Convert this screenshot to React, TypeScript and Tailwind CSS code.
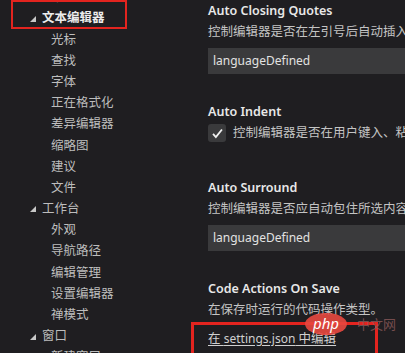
import React from "react";

type TreeItem = { label: string; level: 1 | 2; bold?: boolean; marked?: boolean };

const treeItems: TreeItem[] = [
  { label: "常用设置", level: 2 },
  { label: "文本编辑器", level: 1, bold: true, marked: true },
  { label: "光标", level: 2 },
  { label: "查找", level: 2 },
  { label: "字体", level: 2 },
  { label: "正在格式化", level: 2 },
  { label: "差异编辑器", level: 2 },
  { label: "缩略图", level: 2 },
  { label: "建议", level: 2 },
  { label: "文件", level: 2 },
  { label: "工作台", level: 1 },
  { label: "外观", level: 2 },
  { label: "导航路径", level: 2 },
  { label: "编辑管理", level: 2 },
  { label: "设置编辑器", level: 2 },
  { label: "禅模式", level: 2 },
  { label: "窗口", level: 1 },
  { label: "新建窗口", level: 2 },
];

const Twistie = () => (
  <svg width="6" height="6" viewBox="0 0 6 6" className="mr-[6px]">
    <polygon points="6,0 6,6 0,6" fill="#c8c8c8" />
  </svg>
);

const TreeRow: React.FC<{ item: TreeItem }> = ({ item }) => (
  <div
    className={
      item.level === 1
        ? "relative flex items-center h-[21.2px] pl-[30px]"
        : "relative flex items-center h-[21.2px] pl-[51px]"
    }
  >
    {item.level === 1 && <Twistie />}
    <span
      className={
        item.bold
          ? "text-[12.5px] font-bold text-[#ececec]"
          : "text-[12.5px] text-[#bdbdbd]"
      }
    >
      {item.label}
    </span>
    {/* red annotation box */}
    {item.marked && (
      <div className="absolute left-[11px] top-[-8px] w-[116px] h-[29px] border-[2px] border-[#e3241f]" />
    )}
  </div>
);

const Title: React.FC<{ children: React.ReactNode }> = ({ children }) => (
  <div className="h-[21px] flex items-center text-[12.5px] font-semibold text-[#e8e8e8]">
    {children}
  </div>
);

const Desc: React.FC<{ children: React.ReactNode }> = ({ children }) => (
  <div className="h-[21px] flex items-center text-[12.5px] text-[#c4c4c4] whitespace-nowrap">
    {children}
  </div>
);

const SelectBox = () => (
  <div className="mt-[5px] h-[26px] bg-[#3a3a3c] flex items-center pl-[5px] text-[12px] text-[#e2e2e2]">
    languageDefined
  </div>
);

export default function App() {
  return (
    <div
      className="w-[405px] h-[353px] overflow-hidden bg-[#1f1e21] flex relative"
      style={{ fontFamily: '"Noto Sans", "Noto Sans CJK SC", sans-serif' }}
    >
      <div className="w-[196px] shrink-0 -mt-[13px]">
        {treeItems.map((item) => (
          <TreeRow key={item.label} item={item} />
        ))}
      </div>

      <div className="flex-1 pl-[12px] pt-[1px] min-w-0">
        <Title>Auto Closing Quotes</Title>
        <Desc>控制编辑器是否在左引号后自动插入右引号。</Desc>
        <SelectBox />

        <div className="mt-[28px]">
          <Title>Auto Indent</Title>
          <div className="flex items-center mt-[1px] whitespace-nowrap">
            <div className="w-[18px] h-[18px] rounded-[3px] bg-[#3a3a3c] flex items-center justify-center shrink-0">
              <svg width="13" height="13" viewBox="0 0 16 16">
                <path d="M2.5 8.5 L6 12.5 L13.5 3" fill="none" stroke="#f0f0f0" strokeWidth="2.2" />
              </svg>
            </div>
            <span className="ml-[7px] text-[12.5px] text-[#c4c4c4]">
              控制编辑器是否在用户键入、粘贴或移动行时自动调整缩进。
            </span>
          </div>
        </div>

        <div className="mt-[35px]">
          <Title>Auto Surround</Title>
          <Desc>控制编辑器是否应自动包住所选内容。</Desc>
          <SelectBox />
        </div>

        <div className="mt-[28px]">
          <Title>Code Actions On Save</Title>
          <Desc>在保存时运行的代码操作类型。</Desc>
          <div className="-ml-[17px] w-[187px] mt-[1px] h-[60px] border-[3px] border-[#e3241f] pl-[14px] pt-[4px] text-[12.5px] leading-[20px]">
            <span className="text-[#d0d0d0] underline underline-offset-2 whitespace-nowrap">
              在 <span className="text-[12px]">settings.json</span> 中编辑
            </span>
          </div>
        </div>
      </div>

      {/* watermark */}
      <div className="absolute left-[305px] top-[313px] flex items-center">
        <div className="w-[42px] h-[22px] rounded-[50%] bg-[#e8483f]/90 flex items-center justify-center">
          <span className="text-[15px] italic text-white leading-none -mt-[2px]">php</span>
        </div>
        <span className="ml-[10px] text-[13px] text-[#8c5a5a]/80 leading-none">中文网</span>
      </div>
    </div>
  );
}
